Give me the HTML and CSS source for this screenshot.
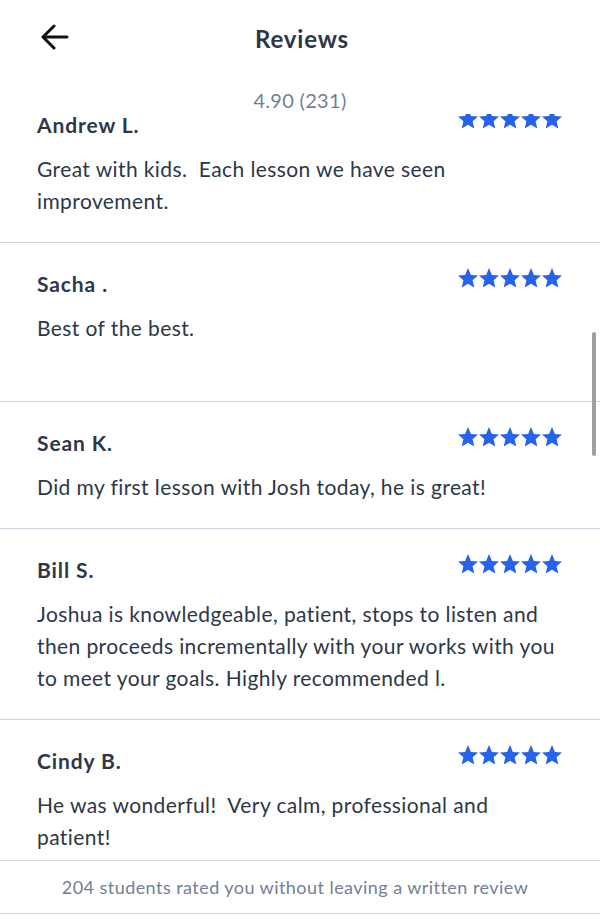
FILE: index.html
```html
<!DOCTYPE html>
<html lang="en">
<head>
  <meta charset="UTF-8" />
  <meta name="viewport" content="width=device-width, initial-scale=1.0"/>
  <title>Reviews</title>
  <link rel="stylesheet" href="styles.css">
</head>
<body>
  <svg width="0" height="0" class="defs">
    <symbol id="star" viewBox="2 2 20 19.5">
      <path d="M12 2l2.9 6.9 7.1.6-5.4 4.7 1.7 7.3L12 17.8 5.7 21.5l1.7-7.3L2 9.5l7.1-.6z"/>
    </symbol>
  </svg>

  <div class="screen">
    <div class="header">
      <div class="topbar">
        <button class="back" aria-label="Back">
          <svg width="28" height="26" viewBox="0 0 28 26" fill="none" stroke="#111" stroke-width="3" stroke-linecap="round" stroke-linejoin="round">
            <path d="M26 13H3"/>
            <path d="M13 2L2 13l11 11"/>
          </svg>
        </button>
        <h1>Reviews</h1>
      </div>
      <div class="rating">4.90 (231)</div>
    </div>

    <div class="list">
      <div class="list-inner">
        <div class="review">
          <div class="review-head">
            <span class="name">Andrew L.</span>
            <span class="stars">
              <svg><use href="#star"/></svg><svg><use href="#star"/></svg><svg><use href="#star"/></svg><svg><use href="#star"/></svg><svg><use href="#star"/></svg>
            </span>
          </div>
          <p class="comment">Great with kids.&nbsp; Each lesson we have seen improvement.</p>
        </div>
        <div class="review">
          <div class="review-head">
            <span class="name">Sacha .</span>
            <span class="stars">
              <svg><use href="#star"/></svg><svg><use href="#star"/></svg><svg><use href="#star"/></svg><svg><use href="#star"/></svg><svg><use href="#star"/></svg>
            </span>
          </div>
          <p class="comment">Best of the best.<br>&nbsp;</p>
        </div>
        <div class="review">
          <div class="review-head">
            <span class="name">Sean K.</span>
            <span class="stars">
              <svg><use href="#star"/></svg><svg><use href="#star"/></svg><svg><use href="#star"/></svg><svg><use href="#star"/></svg><svg><use href="#star"/></svg>
            </span>
          </div>
          <p class="comment">Did my first lesson with Josh today, he is great!</p>
        </div>
        <div class="review">
          <div class="review-head">
            <span class="name">Bill S.</span>
            <span class="stars">
              <svg><use href="#star"/></svg><svg><use href="#star"/></svg><svg><use href="#star"/></svg><svg><use href="#star"/></svg><svg><use href="#star"/></svg>
            </span>
          </div>
          <p class="comment">Joshua is knowledgeable, patient, stops to listen and then proceeds incrementally with your works with you to meet your goals. Highly recommended l.</p>
        </div>
        <div class="review">
          <div class="review-head">
            <span class="name">Cindy B.</span>
            <span class="stars">
              <svg><use href="#star"/></svg><svg><use href="#star"/></svg><svg><use href="#star"/></svg><svg><use href="#star"/></svg><svg><use href="#star"/></svg>
            </span>
          </div>
          <p class="comment">He was wonderful!&nbsp; Very calm, professional and patient!</p>
        </div>
      </div>
      <div class="scrollbar"></div>
    </div>

    <div class="footer">204 students rated you without leaving a written review</div>
  </div>
</body>
</html>
```

FILE: styles.css
```css
body {
  margin: 0;
  font-family: 'Lato', 'Noto Sans', sans-serif;
  background: #ffffff;
  color: #2d3748;
}

.defs {
  position: absolute;
}

.screen {
  width: 600px;
  height: 920px;
  display: flex;
  flex-direction: column;
  overflow: hidden;
}

.header {
  height: 114px;
  flex-shrink: 0;
  position: relative;
  z-index: 1;
  background: #ffffff;
}

.topbar {
  display: flex;
  align-items: center;
  justify-content: center;
  height: 76px;
  position: relative;
}

.back {
  position: absolute;
  left: 41px;
  top: 24px;
  padding: 0;
  border: none;
  background: none;
  line-height: 0;
}

.topbar h1 {
  margin: 0 0 0 4px;
  font-size: 24px;
  font-weight: 700;
  letter-spacing: 0.8px;
  color: #2d3748;
}

.rating {
  text-align: center;
  font-size: 20px;
  letter-spacing: 0.3px;
  color: #718096;
  line-height: 24px;
  margin-top: 12px;
}

.list {
  flex: 1;
  position: relative;
  overflow: hidden;
}

.list-inner {
  margin-top: -30px;
}

.review {
  padding: 27px 38px 25px 37px;
  border-bottom: 1.5px solid #cbd5e0;
}

.review-head {
  display: flex;
  justify-content: space-between;
  align-items: flex-start;
  height: 28px;
}

.name {
  font-size: 21px;
  line-height: 28px;
  font-weight: 700;
  letter-spacing: 0.9px;
  color: #2d3748;
}

.stars {
  display: flex;
  gap: 1px;
  margin-top: -2px;
}

.stars svg {
  width: 20px;
  height: 19.5px;
  fill: #2563eb;
}

.comment {
  margin: 14px 0 0;
  font-size: 21px;
  line-height: 32px;
  letter-spacing: 0.4px;
  color: #2d3748;
}

.scrollbar {
  position: absolute;
  right: 4px;
  top: 218px;
  width: 4px;
  height: 124px;
  border-radius: 2px;
  background: #a0a0a0;
}

.footer {
  flex-shrink: 0;
  height: 52px;
  display: flex;
  align-items: center;
  justify-content: center;
  border-top: 1.5px solid #cbd5e0;
  border-bottom: 1.5px solid #cbd5e0;
  margin-bottom: 6px;
  padding-right: 10px;
  font-size: 18px;
  letter-spacing: 0.45px;
  color: #718096;
}
```
